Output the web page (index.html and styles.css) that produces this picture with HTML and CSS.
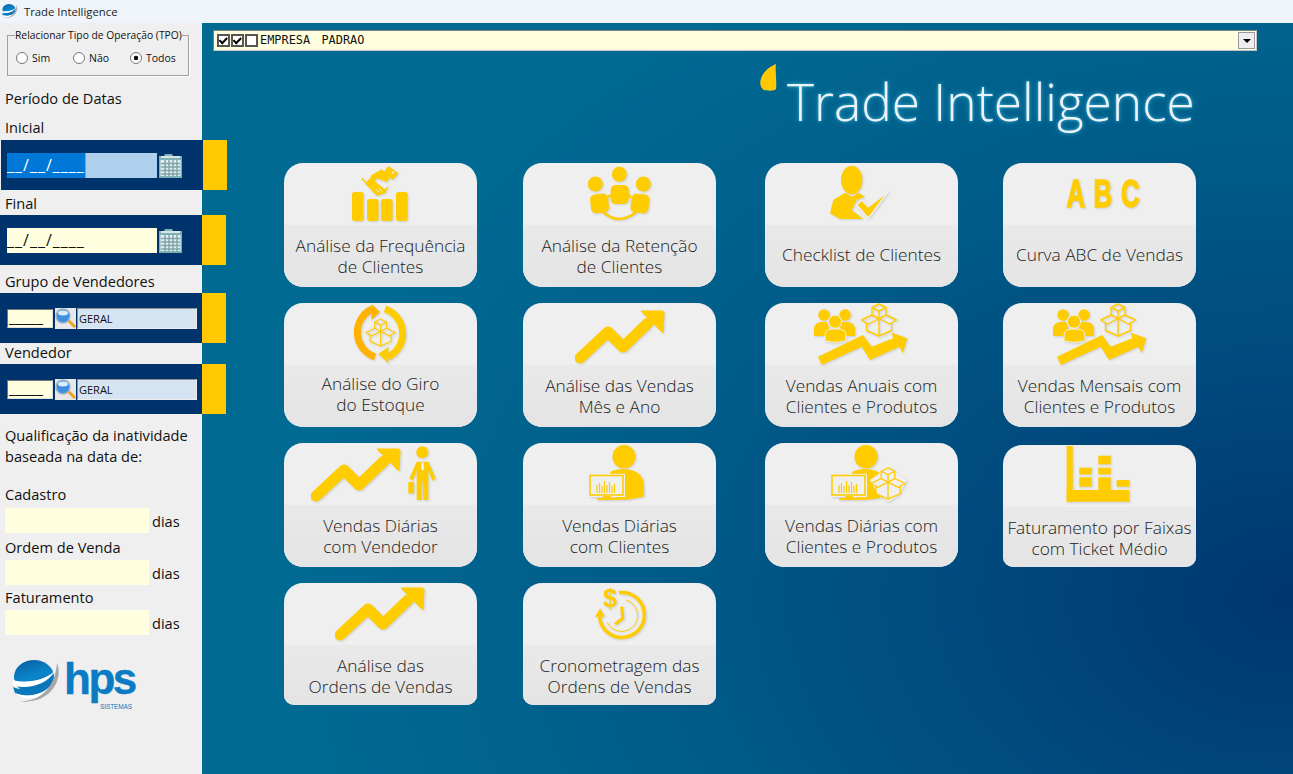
FILE: index.html
```html
<!DOCTYPE html>
<html lang="pt-BR">
<head>
    <meta charset="UTF-8">
    <title>Trade Intelligence</title>
    <link rel="stylesheet" href="styles.css">
</head>
<body>
    <!-- simbolos reaproveitados -->
    <svg class="defs" width="0" height="0">
        <defs>
            <linearGradient id="ballGrad" x1="0" y1="0" x2="0.4" y2="1">
                <stop offset="0" stop-color="#0a5c9e"/>
                <stop offset="0.6" stop-color="#0a86cc"/>
                <stop offset="1" stop-color="#0c6aae"/>
            </linearGradient>
            <symbol id="globe" viewBox="0 0 48 45">
                <ellipse cx="21" cy="17" rx="20" ry="17" fill="url(#ballGrad)"/>
                <path d="M0 20C14 24 32 20 42 11C33 26 12 30 0 25Z" fill="#fff"/>
                <path d="M0 27C12 32 28 30 40 20C30 37 12 38 2 33Z" fill="#0a78bc"/>
                <path d="M2 33C14 38 32 36 41 21C38 34 24 40 10 38Z" fill="#fff"/>
                <path d="M44 3C51 20 36 46 5 41C24 43 42 30 44 3Z" fill="#a6a6a8"/>
            </symbol>
            <symbol id="boxes" viewBox="0 0 38 34">
                <g fill="none" stroke="#ffcc00" stroke-width="1.4" stroke-linejoin="round">
                    <path d="M18.5 1 25.5 4.5 18.5 8 11.5 4.5Z"/>
                    <path d="M11.5 4.5V12M25.5 4.5V12M18.5 8V15.5"/>
                    <path d="M1 17 11.5 12 18.5 15.5 8 21ZM36 17 25.5 12 18.5 15.5 29 21Z"/>
                    <path d="M6 20V27.5L18.5 33 31 27.5V20M18.5 15.5V33"/>
                </g>
            </symbol>
            <symbol id="trend" viewBox="0 0 90 56">
                <path d="M5 49 33 23 48 38 73 14" fill="none" stroke="#ffcc00" stroke-width="11" stroke-linejoin="round" stroke-linecap="round"/>
                <path d="M66 2H87Q89 2 89 4L88 24Z" fill="#ffcc00" stroke="#ffcc00" stroke-width="1" stroke-linejoin="round"/>
            </symbol>
            <symbol id="people-up" viewBox="0 0 193 62">
                <path d="M53 53.7 98 32 106.7 43.7 128.3 35.3 126.7 29.7 142.3 35.3 137.7 50.3 134.3 43.7 105 57 96.7 43.7 56.7 62Z" fill="#ffcc00"/>
                <circle cx="59" cy="12" r="5.7" fill="#ffcc00"/>
                <circle cx="80" cy="12" r="5.7" fill="#ffcc00"/>
                <path d="M49 33V27Q49 19 57 19H62L66 30 61 33Z" fill="#ffcc00"/>
                <path d="M90 33V27Q90 19 82 19H77L73 30 78 33Z" fill="#ffcc00"/>
                <circle cx="70" cy="18.7" r="6.6" fill="#ffcc00" stroke="#efefef" stroke-width="1"/>
                <path d="M60 38V33Q60 26 67 26H73Q81 26 81 33V38Q70 41 60 38Z" fill="#ffcc00" stroke="#efefef" stroke-width="1"/>
                <use href="#boxes" x="95.5" y="0" width="38" height="34"/>
            </symbol>
            <symbol id="analyst" viewBox="0 0 193 62">
                <circle cx="101" cy="13.7" r="11.6" fill="#ffcc00"/>
                <path d="M87 29Q92 26 101 26Q121 27 121 44V53.5Q108 57 93 57Z" fill="#ffcc00"/>
                <path d="M66 30.7H102V54H66Z" fill="#efefef"/>
                <rect x="67" y="32.5" width="33" height="19.5" fill="none" stroke="#ffcc00" stroke-width="1.6"/>
                <path d="M74 50V42M76.5 50V40M79 50V43M81.5 50V38M84 50V42M86.5 50V39M89 50V43M91.5 50V41" stroke="#ffcc00" stroke-width="1.2"/>
                <path d="M80 53H88V55H93V57H74V55H80Z" fill="#ffcc00"/>
            </symbol>
            <symbol id="calendar" viewBox="0 0 25 25">
                <path d="M1 3H6L7 1H14L15 3H24V25H1Z" fill="#7fb0b5"/>
                <rect x="3" y="3" width="19" height="2" fill="#d8e6e8"/>
                <rect x="2.5" y="7" width="20" height="16" fill="#e6eff0"/>
                <path d="M7 7V23M11 7V23M15 7V23M19 7V23M3 10.5H22M3 14H22M3 17.5H22M3 21H22" stroke="#7ea6ac" stroke-width="1.5"/>
            </symbol>
            <symbol id="lens" viewBox="0 0 21 21">
                <path d="M12 13 14 11 21 18 19 20Z" fill="#f0a020"/>
                <circle cx="8" cy="8" r="7" fill="#3f8fe0" stroke="#9fb4c8" stroke-width="1.5"/>
                <ellipse cx="8" cy="5" rx="5" ry="2.5" fill="#d8ecfb"/>
            </symbol>
        </defs>
    </svg>

    <header class="titlebar">
        <svg class="titlebar-icon"><use href="#globe"/></svg>
        <span>Trade Intelligence</span>
    </header>

    <div class="app">
        <aside class="side">
            <fieldset class="tpo">
                <legend>Relacionar Tipo de Operação (TPO)</legend>
                <span class="radio"><i></i>Sim</span>
                <span class="radio"><i></i>Não</span>
                <span class="radio on"><i></i>Todos</span>
            </fieldset>

            <div class="lbl periodo">Período de Datas</div>
            <div class="lbl inicial">Inicial</div>
            <div class="band first">
                <div class="band-fill">
                    <div class="date selected"><span class="date-sel">__/__/____</span></div>
                    <svg class="cal"><use href="#calendar"/></svg>
                </div>
                <div class="tab"></div>
            </div>
            <div class="lbl final">Final</div>
            <div class="band">
                <div class="band-fill">
                    <div class="date">__/__/____</div>
                    <svg class="cal"><use href="#calendar"/></svg>
                </div>
                <div class="tab"></div>
            </div>
            <div class="lbl grupo">Grupo de Vendedores</div>
            <div class="band">
                <div class="band-fill">
                    <div class="code">_____</div>
                    <div class="lookup"><svg><use href="#lens"/></svg></div>
                    <div class="desc">GERAL</div>
                </div>
                <div class="tab"></div>
            </div>
            <div class="lbl vendedor">Vendedor</div>
            <div class="band">
                <div class="band-fill">
                    <div class="code">_____</div>
                    <div class="lookup"><svg><use href="#lens"/></svg></div>
                    <div class="desc">GERAL</div>
                </div>
                <div class="tab"></div>
            </div>

            <p class="qualif">Qualificação da inatividade<br>baseada na data de:</p>
            <div class="lbl cadastro">Cadastro</div>
            <div class="days"><div class="days-input"></div>dias</div>
            <div class="lbl ordem">Ordem de Venda</div>
            <div class="days"><div class="days-input"></div>dias</div>
            <div class="lbl fatur">Faturamento</div>
            <div class="days"><div class="days-input"></div>dias</div>

            <div class="logo">
                <svg class="logo-globe"><use href="#globe"/></svg>
                <div class="logo-name">hps</div>
                <div class="logo-sub">SISTEMAS</div>
            </div>
        </aside>

        <main class="main">
            <div class="combo">
                <i class="chk on"></i><i class="chk on"></i><i class="chk"></i>
                <span class="combo-text">EMPRESA  PADRAO</span>
                <span class="combo-btn"></span>
            </div>

            <div class="head">
                <svg class="drop" viewBox="0 0 17 27"><path d="M16 0C15 4 17 20 16 25 15 27 8 27 4 26 0 24-1 18 2 12 5 6 11 2 16 0Z" fill="#ffc800"/></svg>
                <h1>Trade Intelligence</h1>
            </div>

            <div class="grid">
                <a class="card">
                    <svg class="ico" viewBox="0 0 193 62">
                        <g fill="#ffcc00">
                            <rect x="68" y="29" width="11.5" height="29" rx="2.5"/>
                            <rect x="83" y="36" width="11.5" height="22" rx="2.5"/>
                            <rect x="97" y="36" width="11.5" height="22" rx="2.5"/>
                            <rect x="112" y="29" width="11.5" height="29" rx="2.5"/>
                            <path d="M104.3 3 114.3 10.3 108.7 17 99.3 9.7Z"/>
                            <path d="M86 15.3 87.7 12 97.7 6.3 105.3 15.3 102.7 18.7 97.7 17 92 15.3 91 18.7 101 26.3 105.3 22 101 30.3 92.7 32.7 81 20.3Z"/>
                            <path d="M77.7 15.3 86 23.7" stroke="#ffcc00" stroke-width="1.5"/>
                        </g>
                        <circle cx="109" cy="9.5" r="1.3" fill="#efefef"/>
                        <path d="M92 26 95 29.5M95 25 98 28.5" stroke="#efefef"/>
                    </svg>
                    <div class="card-text">Análise da Frequência<br>de Clientes</div>
                </a>
                <a class="card">
                    <svg class="ico" viewBox="0 0 193 62">
                        <g fill="#ffcc00">
                            <circle cx="96.3" cy="11.3" r="7.5"/>
                            <circle cx="72.3" cy="21" r="7.5"/>
                            <circle cx="120.3" cy="21" r="7.5"/>
                            <rect x="87.7" y="22" width="18" height="19" rx="5"/>
                            <rect x="67.5" y="31" width="18" height="19" rx="5" transform="rotate(-6 76 40)"/>
                            <rect x="108" y="31" width="18" height="19" rx="5" transform="rotate(6 117 40)"/>
                        </g>
                        <path d="M80 49Q96 63 113 49M85 34 88 32M105 32 108 34" fill="none" stroke="#ffcc00" stroke-width="2.5"/>
                    </svg>
                    <div class="card-text">Análise da Retenção<br>de Clientes</div>
                </a>
                <a class="card">
                    <svg class="ico" viewBox="0 0 193 62">
                        <ellipse cx="86.7" cy="17" rx="10.7" ry="14.3" fill="#ffcc00"/>
                        <path d="M65 50.3 68.3 37 80 29.7 86.7 33.7 93.3 29.7 100 33.7 91.7 37 86.7 47 98.3 56 75 56Z" fill="#ffcc00"/>
                        <path d="M91.7 42 96.7 37 103.3 43.7 123.3 28.7 103.3 55.3Z" fill="#ffcc00" stroke="#efefef" stroke-width="1.5"/>
                    </svg>
                    <div class="card-text">Checklist de Clientes</div>
                </a>
                <a class="card">
                    <svg class="ico" viewBox="0 0 193 62">
                        <text class="abc" transform="translate(63.5 44) scale(.66 1)">A</text>
                        <text class="abc" transform="translate(90.5 44) scale(.66 1)">B</text>
                        <text class="abc" transform="translate(118 44) scale(.66 1)">C</text>
                    </svg>
                    <div class="card-text">Curva ABC de Vendas</div>
                </a>

                <a class="card">
                    <svg class="ico" viewBox="0 0 193 62">
                        <path d="M91 54A26 26 0 0 1 88 6" fill="none" stroke="#ffb300" stroke-width="7"/>
                        <path d="M87.5 1 96 9 87.5 17Z" fill="#ffb300"/>
                        <path d="M101 6A26 26 0 0 1 104 54" fill="none" stroke="#ffcc00" stroke-width="7"/>
                        <path d="M104.3 43.7 94.3 51 104.3 60.3Z" fill="#ffcc00"/>
                        <use href="#boxes" x="81" y="15" width="32" height="29"/>
                    </svg>
                    <div class="card-text up">Análise do Giro<br>do Estoque</div>
                </a>
                <a class="card">
                    <svg class="ico" viewBox="0 0 193 62"><use href="#trend" x="52" y="6" width="90" height="56"/></svg>
                    <div class="card-text">Análise das Vendas<br>Mês e Ano</div>
                </a>
                <a class="card">
                    <svg class="ico" viewBox="0 0 193 62"><use href="#people-up" width="193" height="62"/></svg>
                    <div class="card-text">Vendas Anuais com<br>Clientes e Produtos</div>
                </a>
                <a class="card">
                    <svg class="ico" viewBox="0 0 193 62"><use href="#people-up" x="1" width="193" height="62"/></svg>
                    <div class="card-text">Vendas Mensais com<br>Clientes e Produtos</div>
                </a>

                <a class="card">
                    <svg class="ico" viewBox="0 0 193 62">
                        <use href="#trend" x="27" y="4" width="90" height="56"/>
                        <circle cx="138.3" cy="9.3" r="6" fill="#ffcc00"/>
                        <path d="M132.7 18.7H144.3L151.7 35.3 148.3 37.7 144.3 27V57H139.3L138.7 38.7H138L137.7 57H132.7V27L128.7 37.7 125.3 35.3Z" fill="#ffcc00"/>
                        <path d="M137.5 19H139.5L140 26 138.5 28 137 26Z" fill="#efefef"/>
                        <rect x="124.3" y="39" width="5.7" height="11.5" rx="1" fill="#ffcc00"/>
                    </svg>
                    <div class="card-text">Vendas Diárias<br>com Vendedor</div>
                </a>
                <a class="card">
                    <svg class="ico" viewBox="0 0 193 62"><use href="#analyst" width="193" height="62"/></svg>
                    <div class="card-text">Vendas Diárias<br>com Clientes</div>
                </a>
                <a class="card">
                    <svg class="ico" viewBox="0 0 193 62">
                        <use href="#analyst" width="193" height="62"/>
                        <path d="M105 37 123.5 24 142 37 134 52 123.5 59 113 52Z" fill="#efefef"/>
                        <use href="#boxes" x="105" y="22" width="37" height="37"/>
                    </svg>
                    <div class="card-text">Vendas Diárias com<br>Clientes e Produtos</div>
                </a>
                <a class="card short shifted">
                    <svg class="ico" viewBox="0 0 193 62">
                        <g fill="#ffcc00">
                            <rect x="63.7" y="1" width="6" height="55.7"/>
                            <rect x="63.7" y="45" width="62.6" height="11.7"/>
                            <rect x="76.3" y="22.7" width="12.4" height="6.6"/>
                            <rect x="76.3" y="32.3" width="12.4" height="9.4"/>
                            <rect x="95.3" y="10.7" width="12.4" height="8.6"/>
                            <rect x="95.3" y="22.7" width="12.4" height="6.6"/>
                            <rect x="95.3" y="32.3" width="12.4" height="13"/>
                            <rect x="113.7" y="35" width="12.6" height="6.7"/>
                        </g>
                    </svg>
                    <div class="card-text">Faturamento por Faixas<br>com Ticket Médio</div>
                </a>

                <a class="card short">
                    <svg class="ico" viewBox="0 0 193 62"><use href="#trend" x="51" y="3" width="90" height="56"/></svg>
                    <div class="card-text">Análise das<br>Ordens de Vendas</div>
                </a>
                <a class="card short">
                    <svg class="ico" viewBox="0 0 193 62">
                        <path d="M96 9.6A22.5 22.5 0 1 1 76.5 34" fill="none" stroke="#ffcc00" stroke-width="3.5"/>
                        <path d="M77 25.3 72 33.7H82Z" fill="#ffcc00"/>
                        <path d="M103 17A16 16 0 1 1 84 39" fill="none" stroke="#ffcc00" stroke-width="1"/>
                        <path d="M98.7 23.7 99.7 35.3 92 41.3" fill="none" stroke="#ffcc00" stroke-width="3"/>
                        <text class="dollar" x="87" y="24">$</text>
                    </svg>
                    <div class="card-text">Cronometragem das<br>Ordens de Vendas</div>
                </a>
            </div>
        </main>
    </div>
</body>
</html>
```

FILE: styles.css
```css
/* reset */
body{
    margin: 0;
    width: 1293px;
    height: 774px;
    overflow: hidden;
    display: flex;
    flex-direction: column;
    font-family: "Open Sans", "Liberation Sans", sans-serif;
    color: #111;
}
.defs{
    display: block;
    height: 0;
}
/* barra de titulo */
.titlebar{
    height: 23px;
    flex: none;
    background: #eff4fb;
    display: flex;
    align-items: center;
    font-size: 11.3px;
    color: #222;
}
.titlebar-icon{
    width: 16px;
    height: 15px;
    margin: 0 6px 0 2px;
}
.app{
    flex: 1;
    display: flex;
    min-height: 0;
}
/* coluna esquerda */
.side{
    width: 202px;
    flex: none;
    background: #efefef;
    position: relative;
    z-index: 1;
    font-size: 14.6px;
}
.tpo{
    margin: 6px 13px 0 7px;
    padding: 7px 0 0 8px;
    height: 47px;
    box-sizing: border-box;
    border: 1px solid #a0a0a0;
    box-shadow: 1px 1px 0 #fff;
    display: flex;
    font-size: 10.5px;
}
.tpo legend{
    padding: 0;
    margin-left: -1px;
    font-size: 10.3px;
    line-height: 13px;
    white-space: nowrap;
}
.radio{
    width: 57px;
    display: flex;
    align-items: center;
    height: 18px;
}
.radio i{
    width: 10px;
    height: 10px;
    border: 1px solid #777;
    border-radius: 50%;
    background: #fff;
    margin-right: 4px;
    box-sizing: content-box;
}
.radio.on i{
    background: radial-gradient(circle, #111 0 2px, #fff 2.6px);
}
.lbl{
    height: 20px;
    line-height: 18px;
    padding-left: 5px;
    white-space: nowrap;
}
.periodo{ margin-top: 13px; }
.inicial{ margin-top: 9px; margin-bottom: 2px; }
.final{ margin-top: 4px; margin-bottom: 1px; }
.grupo{ margin-top: 7px; margin-bottom: 1px; }
.vendedor{ margin-bottom: 1px; }
.cadastro{ margin-top: 18px; margin-bottom: 3px; }
.ordem{ margin-top: 5px; margin-bottom: 2px; }
.fatur{ margin-top: 3px; margin-bottom: 2px; }

.band{
    display: flex;
    width: 226px;
    height: 50px;
}
.band.first{
    margin-left: 1px;
}
.band-fill{
    width: 202px;
    flex: none;
    background: #00336c;
    display: flex;
    align-items: center;
    padding-left: 7px;
    box-sizing: border-box;
}
.band.first .band-fill{
    padding-left: 6px;
}
.tab{
    flex: 1;
    background: #ffc800;
}
.date{
    width: 150px;
    height: 25px;
    line-height: 24px;
    background: #ffffe0;
    font-size: 16px;
    letter-spacing: 1px;
    white-space: nowrap;
    flex: none;
}
.date.selected{
    background: #afd0ec;
}
.date-sel{
    display: block;
    width: 79px;
    height: 25px;
    background: #0078d7;
    color: #fff;
    border-right: 1px solid #e08a40;
    box-sizing: border-box;
}
.cal{
    width: 25px;
    height: 25px;
    flex: none;
    margin-left: 1px;
}
.code{
    width: 46px;
    height: 19px;
    box-sizing: border-box;
    background: #ffffe0;
    border: 1px solid;
    border-color: #777 #ddd #ddd #777;
    font-size: 15.5px;
    line-height: 14px;
    padding-left: 1px;
}
.lookup{
    width: 21px;
    height: 21px;
    background: #e8e8e8;
    margin-left: 2px;
    flex: none;
}
.lookup svg{
    display: block;
    width: 21px;
    height: 21px;
}
.desc{
    width: 120px;
    height: 21px;
    box-sizing: border-box;
    margin-left: 1px;
    background: #d5e4f2;
    border: 1px solid;
    border-color: #8f8f8f #eee #eee #8f8f8f;
    font-size: 11px;
    line-height: 19px;
    padding-left: 1px;
}
.qualif{
    margin: 11px 0 0;
    padding-left: 5px;
    line-height: 21px;
    white-space: nowrap;
}
.days{
    display: flex;
    align-items: center;
    padding-left: 5px;
    height: 25px;
}
.days-input{
    width: 144px;
    height: 25px;
    background: #ffffe0;
    margin-right: 3px;
}
.logo{
    display: flex;
    margin: 25px 0 0 13px;
    align-items: flex-start;
    position: relative;
}
.logo-globe{
    width: 48px;
    height: 45px;
    flex: none;
}
.logo-name{
    margin: -2px 0 0 3px;
    font-family: "Liberation Sans", sans-serif;
    font-weight: 700;
    font-size: 44px;
    line-height: 42px;
    letter-spacing: -2.5px;
    color: #0b7cc4;
    -webkit-text-stroke: .4px #0b7cc4;
}
.logo-sub{
    position: absolute;
    left: 87px;
    top: 43px;
    font-family: "Liberation Sans", sans-serif;
    font-size: 6.5px;
    line-height: 8px;
    letter-spacing: -.1px;
    color: #0b7cc4;
}
/* area principal */
.main{
    flex: 1;
    min-width: 0;
    padding: 7px 0 0 11px;
    background: radial-gradient(ellipse 1000px 720px at 1085px 575px, #00366f 0%, #004a7e 32%, #005b88 62%, #006690 88%, #006a93 100%);
}
.combo{
    width: 1044px;
    height: 21px;
    box-sizing: border-box;
    background: #ffffe0;
    border: 1px solid;
    border-color: #808080 #c4c4c4 #c4c4c4 #808080;
    display: flex;
    align-items: center;
    padding-left: 3px;
}
.chk{
    width: 13px;
    height: 13px;
    box-sizing: border-box;
    border: 2px solid #555;
    background: #fff;
    margin-right: 1px;
    display: flex;
    align-items: center;
    justify-content: center;
    font-style: normal;
}
.chk.on::before{
    content: "";
    width: 6px;
    height: 3px;
    border: solid #000;
    border-width: 0 0 2px 2px;
    transform: rotate(-45deg) translate(0, -1px);
}
.combo-text{
    margin-left: 1px;
    font-family: "DejaVu Sans Mono", monospace;
    font-size: 11.9px;
    line-height: 17px;
    word-spacing: -1.5px;
    white-space: pre;
    color: #111;
}
.combo-btn{
    margin-left: auto;
    margin-right: 1px;
    width: 17px;
    height: 17px;
    box-sizing: border-box;
    border: 1px solid #999;
    background: #eee;
    display: flex;
    align-items: center;
    justify-content: center;
}
.combo-btn::before{
    content: "";
    border: solid transparent;
    border-width: 4px 4px 0;
    border-top-color: #000;
}
.head{
    height: 112px;
    display: flex;
    padding-left: 547px;
    box-sizing: border-box;
}
.drop{
    width: 17px;
    height: 27px;
    flex: none;
    margin-top: 13px;
}
h1{
    margin: 15px 0 0 10px;
    font-size: 51.4px;
    font-weight: 300;
    line-height: 70px;
    color: #eef3f8;
    white-space: nowrap;
    text-shadow: 0 0 3px #49b5d6, 0 0 6px #1b8fb8;
}
/* grade de cartoes */
.grid{
    margin-left: 71px;
    display: grid;
    grid-template-columns: 239px 242px 238px 193px;
    grid-auto-rows: 124px;
    row-gap: 16px;
}
.card{
    width: 193px;
    height: 124px;
    border-radius: 19px;
    overflow: hidden;
    background: #efefef;
    display: flex;
    flex-direction: column;
}
.card.short{
    height: 122px;
    border-radius: 19px 19px 10px 10px;
}
.card.shifted{
    margin-top: 2px;
}
.ico{
    width: 193px;
    height: 62px;
    display: block;
    flex: none;
    filter: drop-shadow(1px 1px 1px rgba(0,0,0,.14));
}
.abc{
    font-family: "Liberation Sans", sans-serif;
    font-size: 39px;
    font-weight: 700;
    fill: #ffcc00;
    stroke: #ffcc00;
    stroke-width: 1.5px;
}
.dollar{
    font-family: "Liberation Sans", sans-serif;
    font-size: 25px;
    font-weight: 700;
    fill: #ffcc00;
    text-anchor: middle;
}
.card-text{
    flex: 1;
    box-sizing: border-box;
    padding-top: 10px;
    background: linear-gradient(#e9e9e9, #e4e4e4);
    font-weight: 300;
    font-size: 17.3px;
    line-height: 21px;
    text-align: center;
    white-space: nowrap;
    color: #222;
}
.card-text:not(:has(br)){
    padding-top: 19px;
}
.card-text.up{
    padding-top: 8px;
}
```
